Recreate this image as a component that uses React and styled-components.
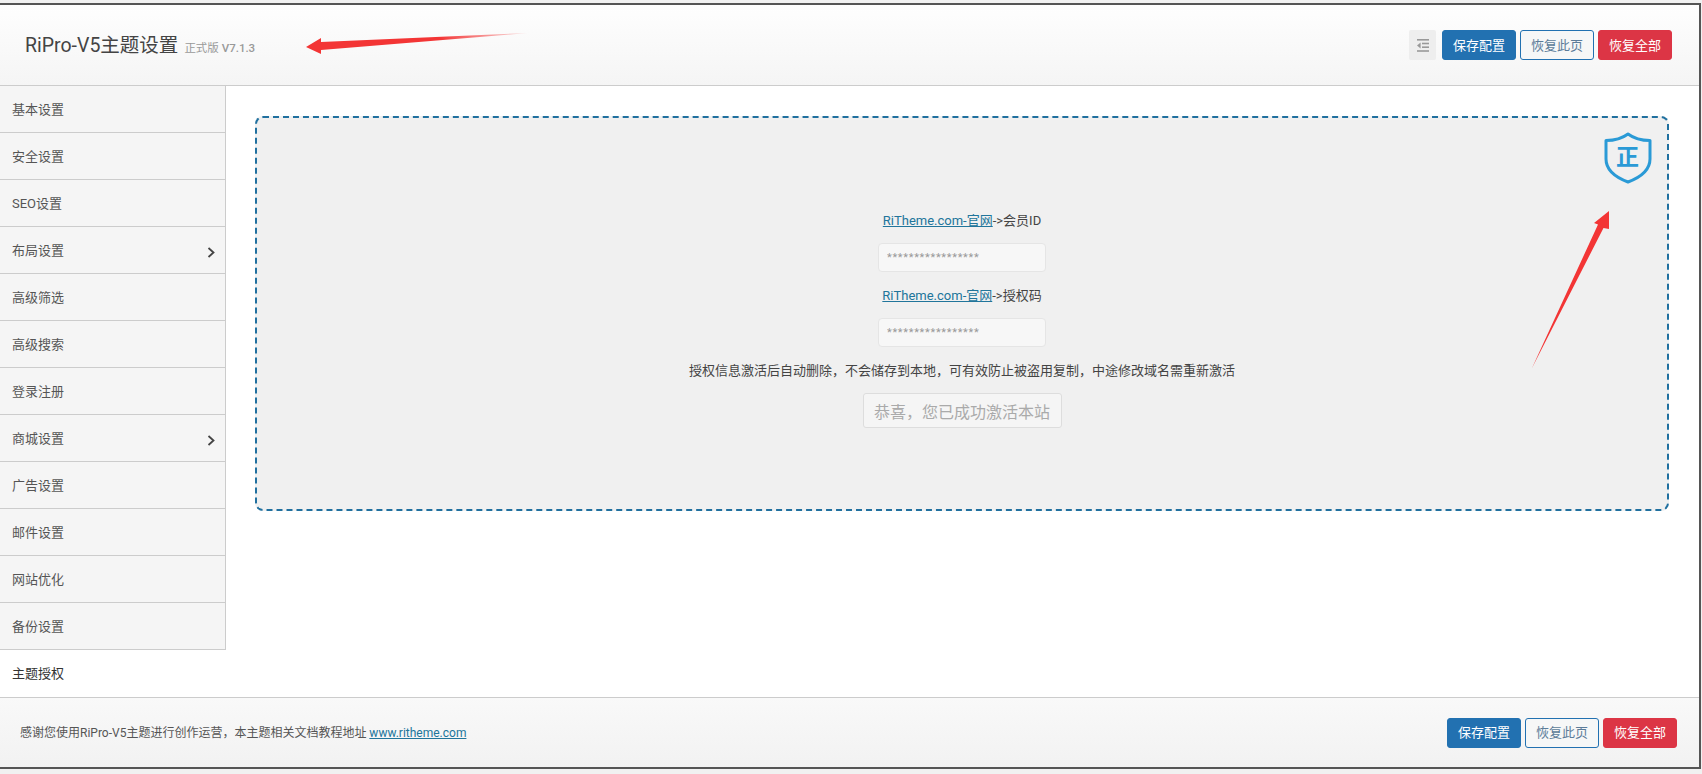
import React from "react"
import styled, { createGlobalStyle } from "styled-components"

const GlobalStyle = createGlobalStyle`
  html, body {
    margin: 0;
    padding: 0;
    background: #f1f1f1;
  }
  body {
    font-family: Roboto, "Noto Sans CJK SC", sans-serif;
    font-size: 13px;
    color: #444;
  }
  * {
    box-sizing: border-box;
  }
`

const NAV_ITEMS = [
  { label: "基本设置" },
  { label: "安全设置" },
  { label: "SEO设置" },
  { label: "布局设置", more: true },
  { label: "高级筛选" },
  { label: "高级搜索" },
  { label: "登录注册" },
  { label: "商城设置", more: true },
  { label: "广告设置" },
  { label: "邮件设置" },
  { label: "网站优化" },
  { label: "备份设置" },
  { label: "主题授权", active: true },
]

const Page = styled.div`
  position: relative;
  width: 1702px;
  height: 774px;
  padding-top: 3px;
  overflow: hidden;
`

const Frame = styled.div`
  width: 1701px;
  height: 766px;
  display: flex;
  flex-direction: column;
  background: #fff;
  border-top: 2px solid #555;
  border-right: 2px solid #555;
  border-bottom: 2px solid #555;
`

const Header = styled.header`
  height: 81px;
  flex: none;
  display: flex;
  align-items: center;
  justify-content: space-between;
  padding: 0 27px 0 25px;
  background: linear-gradient(#fefefe, #f5f5f5);
  border-bottom: 1px solid #ccc;
`

const Title = styled.h1`
  margin: 0 0 3px;
  display: flex;
  align-items: baseline;
  gap: 6px;
  font-size: 19.5px;
  font-weight: 400;
  color: #444;
`

const Version = styled.small`
  font-size: 11.5px;
  color: #999;
`

const VersionNumber = styled.b`
  font-weight: 500;
`

const Actions = styled.div`
  display: flex;
  align-items: center;
  gap: 4px;
`

const Toggle = styled.div`
  width: 27px;
  height: 30px;
  margin-right: 2px;
  display: flex;
  align-items: center;
  justify-content: center;
  background: #eee;
  border-radius: 2px;
`

const Button = styled.button`
  width: 74px;
  height: 30px;
  padding: 0 0 2px;
  font-family: inherit;
  font-size: 13px;
  border-radius: 3px;
  border: 1px solid ${(p) => (p.$kind === "danger" ? "#dc3545" : "#2271b1")};
  color: ${(p) => (p.$kind === "outline" ? "#5b7c99" : "#fff")};
  background: ${(p) =>
    p.$kind === "danger" ? "#dc3545" : p.$kind === "outline" ? "#f6f7f7" : "#2271b1"};
`

const Body = styled.div`
  flex: 1;
  min-height: 0;
  display: flex;
`

const Nav = styled.nav`
  width: 226px;
  flex: none;
  display: flex;
  flex-direction: column;
`

const NavItem = styled.div`
  height: ${(p) => (p.$active ? "46px" : "47px")};
  display: flex;
  align-items: center;
  justify-content: space-between;
  padding: 0 10px 2px 12px;
  font-size: 13px;
  color: ${(p) => (p.$active ? "#333" : "#555")};
  background: ${(p) => (p.$active ? "#fff" : "#f5f5f5")};
  border-right: ${(p) => (p.$active ? "none" : "1px solid #ccc")};
  border-bottom: ${(p) => (p.$active ? "none" : "1px solid #ccc")};
`

const ChevronIcon = styled.svg`
  margin-top: 6px;
`

const Content = styled.main`
  flex: 1;
  padding: 30px 30px 0 29px;
`

const Panel = styled.section`
  position: relative;
  height: 395px;
  padding-top: 93px;
  display: flex;
  flex-direction: column;
  align-items: center;
  background: #f0f0f0;
  border: 2px dashed #20709f;
  border-radius: 8px;
`

const Badge = styled.svg`
  position: absolute;
  top: 14px;
  right: 15px;
`

const FieldLabel = styled.div`
  height: 20px;
  margin-bottom: 12px;
  line-height: 20px;
  font-size: 13px;
  color: #444;
`

const LabelLink = styled.a`
  color: #21759b;
  text-decoration: underline;
`

const Field = styled.input`
  width: 168px;
  height: 29px;
  margin-bottom: 14px;
  padding: 0 8px;
  font-family: inherit;
  font-size: 11px;
  letter-spacing: 0.7px;
  background: #f7f7f7;
  border: 1px solid #e5e5e5;
  border-radius: 4px;
  outline: none;
  &::placeholder {
    color: #999;
  }
`

const Note = styled.p`
  height: 20px;
  margin: 0 0 12px;
  line-height: 20px;
  font-size: 13px;
  color: #444;
`

const ActivateButton = styled.button`
  width: 199px;
  height: 35px;
  padding: 0;
  font-family: inherit;
  font-size: 16px;
  color: #aaa;
  background: #f5f5f5;
  border: 1px solid #ddd;
  border-radius: 3px;
`

const Footer = styled.footer`
  height: 70px;
  flex: none;
  display: flex;
  align-items: center;
  justify-content: space-between;
  padding: 0 22px 0 20px;
  background: linear-gradient(#f9f9f9, #f2f2f2);
  border-top: 1px solid #ccc;
`

const FooterText = styled.div`
  margin-bottom: 3px;
  font-size: 12px;
  color: #555;
`

const FooterLink = styled.a`
  color: #21759b;
  text-decoration: underline;
`

// red arrows drawn on top of the screenshot
const Annotation = styled.svg`
  position: absolute;
  left: 0;
  top: 0;
  pointer-events: none;
`

function Chevron() {
  return (
    <ChevronIcon width="8" height="11" viewBox="0 0 8 11" fill="none">
      <path d="M1.5 1 L6.5 5.5 L1.5 10" stroke="#444" strokeWidth="1.8" />
    </ChevronIcon>
  )
}

function OutdentIcon() {
  return (
    <svg width="12" height="13" viewBox="0 0 12 13" fill="#999">
      <rect x="0" y="0" width="12" height="1.6" />
      <rect x="5" y="3.7" width="7" height="1.6" />
      <rect x="5" y="7.4" width="7" height="1.6" />
      <rect x="0" y="11.2" width="12" height="1.6" />
      <path d="M3.6 3.4 V9.4 L0 6.4 Z" />
    </svg>
  )
}

function ActionButtons() {
  return (
    <>
      <Button>保存配置</Button>
      <Button $kind="outline">恢复此页</Button>
      <Button $kind="danger">恢复全部</Button>
    </>
  )
}

export default function App() {
  return (
    <Page>
      <GlobalStyle />
      <Frame>
        <Header>
          <Title>
            RiPro-V5主题设置
            <Version>
              正式版 <VersionNumber>V7.1.3</VersionNumber>
            </Version>
          </Title>
          <Actions>
            <Toggle>
              <OutdentIcon />
            </Toggle>
            <ActionButtons />
          </Actions>
        </Header>
        <Body>
          <Nav>
            {NAV_ITEMS.map((item) => (
              <NavItem key={item.label} $active={item.active}>
                {item.label}
                {item.more && <Chevron />}
              </NavItem>
            ))}
          </Nav>
          <Content>
            <Panel>
              <Badge width="48" height="52" viewBox="0 0 48 52" fill="none">
                <path
                  d="M24 2 C30 6.5 38 8.5 46 8.5 V27 C46 38 36 45.5 24 50 C12 45.5 2 38 2 27 V8.5 C10 8.5 18 6.5 24 2 Z"
                  stroke="#2a9ad6"
                  strokeWidth="3"
                  strokeLinejoin="round"
                />
                <text
                  x="23.5"
                  y="33"
                  textAnchor="middle"
                  fontSize="23"
                  fontWeight="700"
                  fill="#2a9ad6"
                  fontFamily="'Noto Sans CJK SC', sans-serif"
                >
                  正
                </text>
              </Badge>
              <FieldLabel>
                <LabelLink>RiTheme.com-官网</LabelLink>-&gt;会员ID
              </FieldLabel>
              <Field placeholder="*****************" />
              <FieldLabel>
                <LabelLink>RiTheme.com-官网</LabelLink>-&gt;授权码
              </FieldLabel>
              <Field placeholder="*****************" />
              <Note>授权信息激活后自动删除，不会储存到本地，可有效防止被盗用复制，中途修改域名需重新激活</Note>
              <ActivateButton disabled>恭喜，您已成功激活本站</ActivateButton>
            </Panel>
          </Content>
        </Body>
        <Footer>
          <FooterText>
            感谢您使用RiPro-V5主题进行创作运营，本主题相关文档教程地址 <FooterLink>www.ritheme.com</FooterLink>
          </FooterText>
          <Actions>
            <ActionButtons />
          </Actions>
        </Footer>
      </Frame>
      <Annotation width="1702" height="774" viewBox="0 0 1702 774">
        <defs>
          <linearGradient id="tailFade" x1="306" y1="0" x2="528" y2="0" gradientUnits="userSpaceOnUse">
            <stop offset="0" stopColor="#f33535" />
            <stop offset="0.6" stopColor="#f33535" />
            <stop offset="1" stopColor="#f33535" stopOpacity="0.1" />
          </linearGradient>
        </defs>
        <path d="M306 47 L321 38 L321 42 L528 33 L321 50 L321 54 Z" fill="url(#tailFade)" />
        <path d="M1609 211 L1609 229 L1603.5 228 L1532 368 L1598 224.5 L1594 223 Z" fill="#f33535" />
      </Annotation>
    </Page>
  )
}
